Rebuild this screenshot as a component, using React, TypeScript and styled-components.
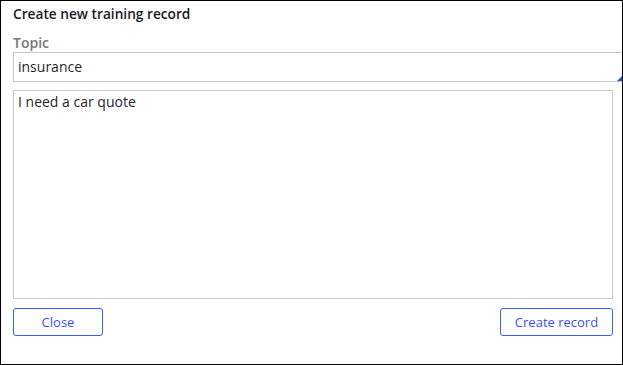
import React from 'react';
import styled, { createGlobalStyle } from 'styled-components';

const GlobalStyle = createGlobalStyle`
  html, body {
    margin: 0;
    padding: 0;
    background: #fff;
  }
  * {
    box-sizing: border-box;
  }
`;

const App = () => {
  return (
    <>
      <GlobalStyle />
      <Dialog>
        <Title>Create new training record</Title>
        <Label>Topic</Label>
        <TopicField>
          insurance
          <ResizeGrip />
        </TopicField>
        <MessageArea>I need a car quote</MessageArea>
        <ButtonRow>
          <ActionButton $width={90}>Close</ActionButton>
          <ActionButton $width={113}>Create record</ActionButton>
        </ButtonRow>
      </Dialog>
    </>
  );
};

export default App;

const Dialog = styled.div`
  width: 623px;
  height: 365px;
  border: 1px solid #000;
  background: #fff;
  overflow: hidden;
  display: flex;
  flex-direction: column;
  padding: 3px 0 0 12px;
  font-family: 'Open Sans', 'Noto Sans', sans-serif;
`;

const Title = styled.h1`
  margin: 0;
  font-size: 13.7px;
  font-weight: 600;
  line-height: 20px;
  color: #1a1a28;
`;

const Label = styled.div`
  margin-top: 9px;
  font-size: 14px;
  font-weight: 600;
  line-height: 19px;
  color: #767676;
`;

const TopicField = styled.div`
  position: relative;
  height: 30px;
  border: 1px solid #c8c8c8;
  border-right: none;
  padding: 0 4px;
  font-size: 14px;
  line-height: 28px;
  color: #1f1f2e;
`;

const ResizeGrip = styled.span`
  position: absolute;
  right: 0;
  bottom: 0;
  width: 0;
  height: 0;
  border-left: 5px solid transparent;
  border-bottom: 5px solid #1a5fd6;
`;

const MessageArea = styled.div`
  height: 209px;
  margin: 8px 9px 0 0;
  border: 1px solid #c8c8c8;
  padding: 1px 4px;
  font-size: 14px;
  line-height: 20px;
  color: #1f1f2e;
`;

const ButtonRow = styled.div`
  display: flex;
  justify-content: space-between;
  margin: 9px 9px 0 0;
`;

const ActionButton = styled.button<{ $width: number }>`
  width: ${(p) => p.$width}px;
  height: 28px;
  padding: 0;
  border: 1px solid #3a5cf5;
  border-radius: 3px;
  background: #fff;
  color: #3a4ff0;
  font-family: 'Open Sans', 'Noto Sans', sans-serif;
  font-size: 13px;
  cursor: pointer;
`;
